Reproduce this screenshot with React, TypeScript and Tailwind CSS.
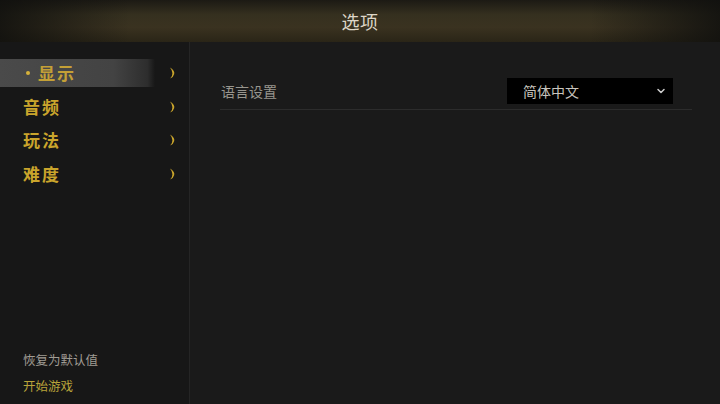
import { ChevronDown } from "lucide-react";

const cjk = "font-['Noto_Sans_CJK_SC','Noto_Sans',sans-serif]";

const menu = [
  { label: "显示", active: true },
  { label: "音频", active: false },
  { label: "玩法", active: false },
  { label: "难度", active: false },
];

// small crescent-shaped arrow used by the game menu
function Crescent() {
  return (
    <svg width="6" height="12" viewBox="0 0 6 12" className="text-[#caa52c]">
      <path d="M1 0.5 Q6 3.5 5.2 7 Q4.6 10 1.2 11.5 Q3.6 8.5 3.4 6.2 Q3.2 3 1 0.5 Z" fill="currentColor" />
    </svg>
  );
}

export default function App() {
  return (
    <div className={`w-[720px] h-[404px] flex flex-col bg-[#1a1a1a] overflow-hidden ${cjk}`}>
      {/* Header */}
      <div className="relative h-[42px] shrink-0 flex items-center justify-center bg-[linear-gradient(180deg,#1c1a14_0%,#35301f_35%,#3a3220_65%,#2a2517_100%)]">
        <div className="absolute inset-0 bg-[linear-gradient(90deg,rgba(16,16,14,0.85)_0%,rgba(16,16,14,0)_18%,rgba(16,16,14,0)_82%,rgba(16,16,14,0.85)_100%)]" />
        <span className="relative text-[18px] leading-none text-[#ddd6c8] tracking-wide">选项</span>
      </div>

      <div className="flex flex-1 min-h-0">
        {/* Sidebar */}
        <div className="w-[190px] shrink-0 flex flex-col justify-between bg-[#171717] border-r border-[#252525] pt-[17px] pb-[8px]">
          <div className="flex flex-col">
            {menu.map((m) => (
              <div
                key={m.label}
                className={`h-[28px] mb-[5.5px] flex items-center justify-between pl-[23px] pr-[14px] ${
                  m.active ? "bg-[linear-gradient(90deg,#4a4a4a_0%,#434343_60%,rgba(60,60,60,0.6)_78%,rgba(40,40,40,0)_82%)]" : ""
                }`}
              >
                <span className="flex items-center text-[17px] font-bold tracking-[2px] text-[#caa52c]">
                  {m.active && <span className="w-[4px] h-[4px] rounded-full bg-[#d6b23a] ml-[3px] mr-[8px]" />}
                  <span className={m.active ? "text-[#c4a036]" : ""}>{m.label}</span>
                </span>
                <Crescent />
              </div>
            ))}
          </div>
          <div className="flex flex-col gap-[8px] pl-[23px] text-[12.5px]">
            <span className="text-[#a09c94]">恢复为默认值</span>
            <span className="text-[#b9a33a]">开始游戏</span>
          </div>
        </div>

        {/* Main */}
        <div className="flex-1 pl-[30px] pr-[28px] pt-[36px]">
          <div className="flex items-center justify-between border-b border-[#2c2c2c] pb-[5px] pl-[1px]">
            <span className="text-[14px] text-[#98968e]">语言设置</span>
            <div className="w-[166px] h-[26px] mr-[19px] bg-black flex items-center justify-between pl-[16px] pr-[6px]">
              <span className="text-[14px] text-[#c8c5be]">简体中文</span>
              <ChevronDown size={12} strokeWidth={3} className="text-[#cccccc]" />
            </div>
          </div>
        </div>
      </div>
    </div>
  );
}
